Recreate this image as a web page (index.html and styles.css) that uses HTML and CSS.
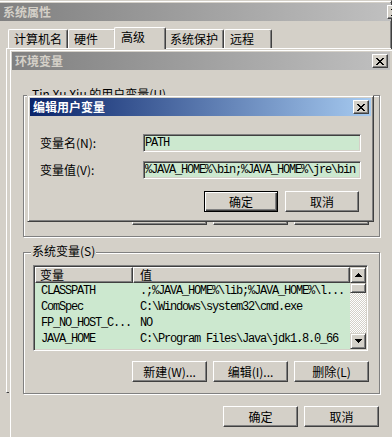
FILE: index.html
```html
<!DOCTYPE html>
<html>

<head>
    <meta charset="utf-8">
    <title>环境变量</title>
    <link rel="stylesheet" href="styles.css">
</head>

<body>
    <div class="window window-cut sysprops">
        <div class="titlebar inactive">
            <span class="caption">系统属性</span>
            <button class="close-btn">
                <svg width="8" height="7" viewBox="0 0 8 7"><path d="M0 0h2v1H0zM6 0h2v1H6zM1 1h2v1H1zM5 1h2v1H5zM2 2h4v1H2zM3 3h2v1H3zM2 4h4v1H2zM1 5h2v1H1zM5 5h2v1H5zM0 6h2v1H0zM6 6h2v1H6z"/></svg>
            </button>
        </div>
        <div class="tabs">
            <div class="tab">计算机名</div>
            <div class="tab">硬件</div>
            <div class="tab active">高级</div>
            <div class="tab">系统保护</div>
            <div class="tab">远程</div>
        </div>
        <div class="tab-panel"></div>
    </div>

    <div class="window window-cut envvars">
        <div class="titlebar inactive">
            <span class="caption">环境变量</span>
            <button class="close-btn">
                <svg width="8" height="7" viewBox="0 0 8 7"><path d="M0 0h2v1H0zM6 0h2v1H6zM1 1h2v1H1zM5 1h2v1H5zM2 2h4v1H2zM3 3h2v1H3zM2 4h4v1H2zM1 5h2v1H1zM5 5h2v1H5zM0 6h2v1H0zM6 6h2v1H6z"/></svg>
            </button>
        </div>
        <div class="env-content">
            <div class="group">
                <span class="group-label">Tin Xu Xiu 的用户变量(U)</span>
                <div class="listview"></div>
                <!-- covered by the edit dialog, only the bottom edges show -->
                <div class="btn-row">
                    <button class="btn"></button>
                    <button class="btn"></button>
                    <button class="btn"></button>
                </div>
            </div>

            <div class="group">
                <span class="group-label">系统变量(S)</span>
                <div class="listview">
                    <div class="list-body">
                        <div class="list-header">
                            <div class="col-head col-name">变量</div>
                            <div class="col-head col-value">值</div>
                        </div>
                        <div class="list-row">
                            <span class="cell-name">CLASSPATH</span>
                            <span class="cell-value">.;%JAVA_HOME%\lib;%JAVA_HOME%\l...</span>
                        </div>
                        <div class="list-row">
                            <span class="cell-name">ComSpec</span>
                            <span class="cell-value">C:\Windows\system32\cmd.exe</span>
                        </div>
                        <div class="list-row">
                            <span class="cell-name">FP_NO_HOST_C...</span>
                            <span class="cell-value">NO</span>
                        </div>
                        <div class="list-row">
                            <span class="cell-name">JAVA_HOME</span>
                            <span class="cell-value">C:\Program Files\Java\jdk1.8.0_66</span>
                        </div>
                    </div>
                    <div class="scrollbar">
                        <div class="sb-btn">
                            <svg width="7" height="4" viewBox="0 0 7 4"><path d="M3 0h1v1H3zM2 1h3v1H2zM1 2h5v1H1zM0 3h7v1H0z"/></svg>
                        </div>
                        <div class="sb-thumb"></div>
                        <div class="sb-track"></div>
                        <div class="sb-btn">
                            <svg width="7" height="4" viewBox="0 0 7 4"><path d="M0 0h7v1H0zM1 1h5v1H1zM2 2h3v1H2zM3 3h1v1H3z"/></svg>
                        </div>
                    </div>
                </div>
                <div class="btn-row">
                    <button class="btn">新建(W)...</button>
                    <button class="btn">编辑(I)...</button>
                    <button class="btn">删除(L)</button>
                </div>
            </div>

            <div class="env-buttons">
                <button class="btn">确定</button>
                <button class="btn">取消</button>
            </div>
        </div>
    </div>

    <div class="window edit-dialog">
        <div class="titlebar active">
            <span class="caption">编辑用户变量</span>
            <button class="close-btn">
                <svg width="8" height="7" viewBox="0 0 8 7"><path d="M0 0h2v1H0zM6 0h2v1H6zM1 1h2v1H1zM5 1h2v1H5zM2 2h4v1H2zM3 3h2v1H3zM2 4h4v1H2zM1 5h2v1H1zM5 5h2v1H5zM0 6h2v1H0zM6 6h2v1H6z"/></svg>
            </button>
        </div>
        <div class="edit-body">
            <div class="field-row">
                <label class="field-label" for="varname">变量名(N):</label>
                <input class="field-input" type="text" id="varname" value="PATH" readonly>
            </div>
            <div class="field-row">
                <label class="field-label" for="varvalue">变量值(V):</label>
                <input class="field-input" type="text" id="varvalue" value="%JAVA_HOME%\bin;%JAVA_HOME%\jre\bin" readonly>
            </div>
            <div class="edit-buttons">
                <button class="btn btn-default">确定</button>
                <button class="btn">取消</button>
            </div>
        </div>
    </div>
</body>

</html>
```

FILE: styles.css
```css
* {
    box-sizing: border-box;
}

body {
    margin: 0;
    width: 392px;
    height: 437px;
    overflow: hidden;
    position: relative;
    background-color: #d4d0c8;
    font-family: "Noto Sans CJK SC", "Liberation Sans", sans-serif;
    font-size: 12px;
    line-height: 14px;
    color: #000;
}

/* classic 3d window frame */
.window {
    position: absolute;
    background-color: #d4d0c8;
    border: 1px solid;
    border-color: #d4d0c8 #404040 #404040 #d4d0c8;
    box-shadow: inset 1px 1px #fff, inset -1px -1px #808080;
    padding: 2px;
}

/* windows whose lower part is outside the screenshot */
.window-cut {
    border-bottom: 0;
    box-shadow: inset 1px 1px #fff, inset -1px 0 #808080;
}

.sysprops {
    left: -3px;
    top: 0;
    width: 395px;
    height: 437px;
    padding-right: 0;
}

.envvars {
    left: 9px;
    top: 49px;
    width: 383px;
    height: 388px;
    padding-right: 2px;
    border-right: 0;
    box-shadow: inset 1px 1px #fff;
}

.edit-dialog {
    left: 27px;
    top: 95px;
    width: 347px;
    height: 127px;
}

.titlebar {
    height: 18px;
    display: flex;
    align-items: center;
    justify-content: space-between;
    padding: 0 2px 0 3px;
    font-weight: bold;
}

.titlebar.inactive {
    background: linear-gradient(to right, #808080, #c0c0c0);
    color: #d4d0c8;
}

.titlebar.active {
    background: linear-gradient(to right, #0a246a, #a6caf0);
    color: #fff;
}

.sysprops .titlebar {
    padding-right: 0;
}

.sysprops .close-btn {
    margin-right: -12px;
}

.close-btn {
    width: 16px;
    height: 14px;
    flex-shrink: 0;
    padding: 0 1px 0 0;
    background-color: #d4d0c8;
    border: 1px solid;
    border-color: #fff #404040 #404040 #fff;
    box-shadow: inset -1px -1px #808080;
    display: flex;
    align-items: center;
    justify-content: center;
}

.close-btn svg {
    display: block;
    fill: #000;
}

/* tabs */
.tabs {
    display: flex;
    align-items: flex-end;
    height: 21px;
    margin: 6px 0 0 8px;
}

.tab {
    min-width: 48px;
    height: 19px;
    padding: 2px 5px 0;
    border: 1px solid;
    border-bottom: 0;
    border-color: #fff #404040 #404040 #fff;
    box-shadow: inset -1px 0 #808080;
    border-radius: 2px 2px 0 0;
    background-color: #d4d0c8;
    white-space: nowrap;
}

.tab.active {
    min-width: 52px;
    height: 22px;
    padding-left: 6px;
    margin: 0 -2px -1px;
    position: relative;
    z-index: 1;
}

.tab-panel {
    margin-left: 6px;
    height: 345px;
    border: 1px solid;
    border-right: 0;
    border-color: #fff #404040 #404040 #fff;
}

/* environment variables window */
.env-content {
    width: 357px;
    margin-left: 11px;
    padding-top: 25px;
}

.group {
    position: relative;
    height: 142px;
    border: 1px solid #808080;
    box-shadow: inset 1px 1px #fff, 1px 1px #fff;
    padding: 12px 10px 0 9px;
}

.group + .group {
    margin-top: 15px;
}

.group-label {
    position: absolute;
    top: -9px;
    left: 7px;
    padding: 0 1px;
    background-color: #d4d0c8;
    white-space: nowrap;
}

.listview {
    width: 335px;
    height: 86px;
    display: flex;
    border: 1px solid;
    border-color: #808080 #fff #fff #808080;
    box-shadow: inset 1px 1px #404040, inset -1px -1px #d4d0c8;
    padding: 1px;
    background-color: #cce8cf;
}

.list-body {
    flex: 1;
    overflow: hidden;
}

.list-header {
    display: flex;
    height: 16px;
}

.col-head {
    height: 16px;
    border: 1px solid;
    border-color: #fff #404040 #404040 #fff;
    box-shadow: inset -1px -1px #808080;
    background-color: #d4d0c8;
    padding-left: 4px;
}

.col-name {
    width: 98px;
}

.col-value {
    flex: 1;
    padding-left: 6px;
}

.list-row {
    display: flex;
    height: 16px;
    line-height: 16px;
    font-family: "Liberation Mono", monospace;
    letter-spacing: -1.2px;
    white-space: nowrap;
}

.cell-name {
    width: 98px;
    padding-left: 6px;
}

.cell-value {
    padding-left: 7px;
}

.scrollbar {
    width: 16px;
    display: flex;
    flex-direction: column;
}

.sb-btn,
.sb-thumb {
    background-color: #d4d0c8;
    border: 1px solid;
    border-color: #d4d0c8 #404040 #404040 #d4d0c8;
    box-shadow: inset 1px 1px #fff, inset -1px -1px #808080;
}

.sb-btn {
    height: 16px;
    display: flex;
    align-items: center;
    justify-content: center;
}

.sb-btn svg {
    display: block;
    fill: #000;
}

.sb-thumb {
    height: 10px;
}

.sb-track {
    flex: 1;
    background: conic-gradient(#fff 25%, #d4d0c8 0 50%, #fff 0 75%, #d4d0c8 0) 0 0 / 2px 2px;
}

/* buttons */
.btn {
    width: 75px;
    height: 21px;
    padding: 0;
    font: inherit;
    line-height: 19px;
    color: #000;
    background-color: #d4d0c8;
    border: 1px solid;
    border-color: #fff #404040 #404040 #fff;
    box-shadow: inset -1px -1px #808080;
}

.btn-default {
    border-color: #000;
    box-shadow: inset 1px 1px #fff, inset -1px -1px #404040, inset -2px -2px #808080;
}

.btn-row {
    display: flex;
    justify-content: flex-end;
    gap: 6px;
    margin-top: 10px;
}

.env-buttons {
    display: flex;
    justify-content: flex-end;
    gap: 6px;
    margin-top: 12px;
    padding-right: 1px;
}

/* edit dialog */
.edit-body {
    display: flex;
    flex-direction: column;
    gap: 9px;
    padding: 18px 10px 0;
}

.field-row {
    display: flex;
    align-items: center;
    height: 18px;
}

.field-label {
    width: 103px;
}

.field-input {
    width: 218px;
    height: 18px;
    margin: 0;
    padding: 0 1px;
    background-color: #cce8cf;
    border: 1px solid;
    border-color: #808080 #fff #fff #808080;
    box-shadow: inset 1px 1px #404040, inset -1px -1px #d4d0c8;
    font-family: "Liberation Mono", monospace;
    font-size: 12px;
    letter-spacing: -1.2px;
    color: #000;
    outline: none;
}

.edit-buttons {
    display: flex;
    justify-content: flex-end;
    gap: 7px;
    margin-top: 3px;
    padding-right: 2px;
}

.edit-buttons .btn {
    width: 74px;
}
```
